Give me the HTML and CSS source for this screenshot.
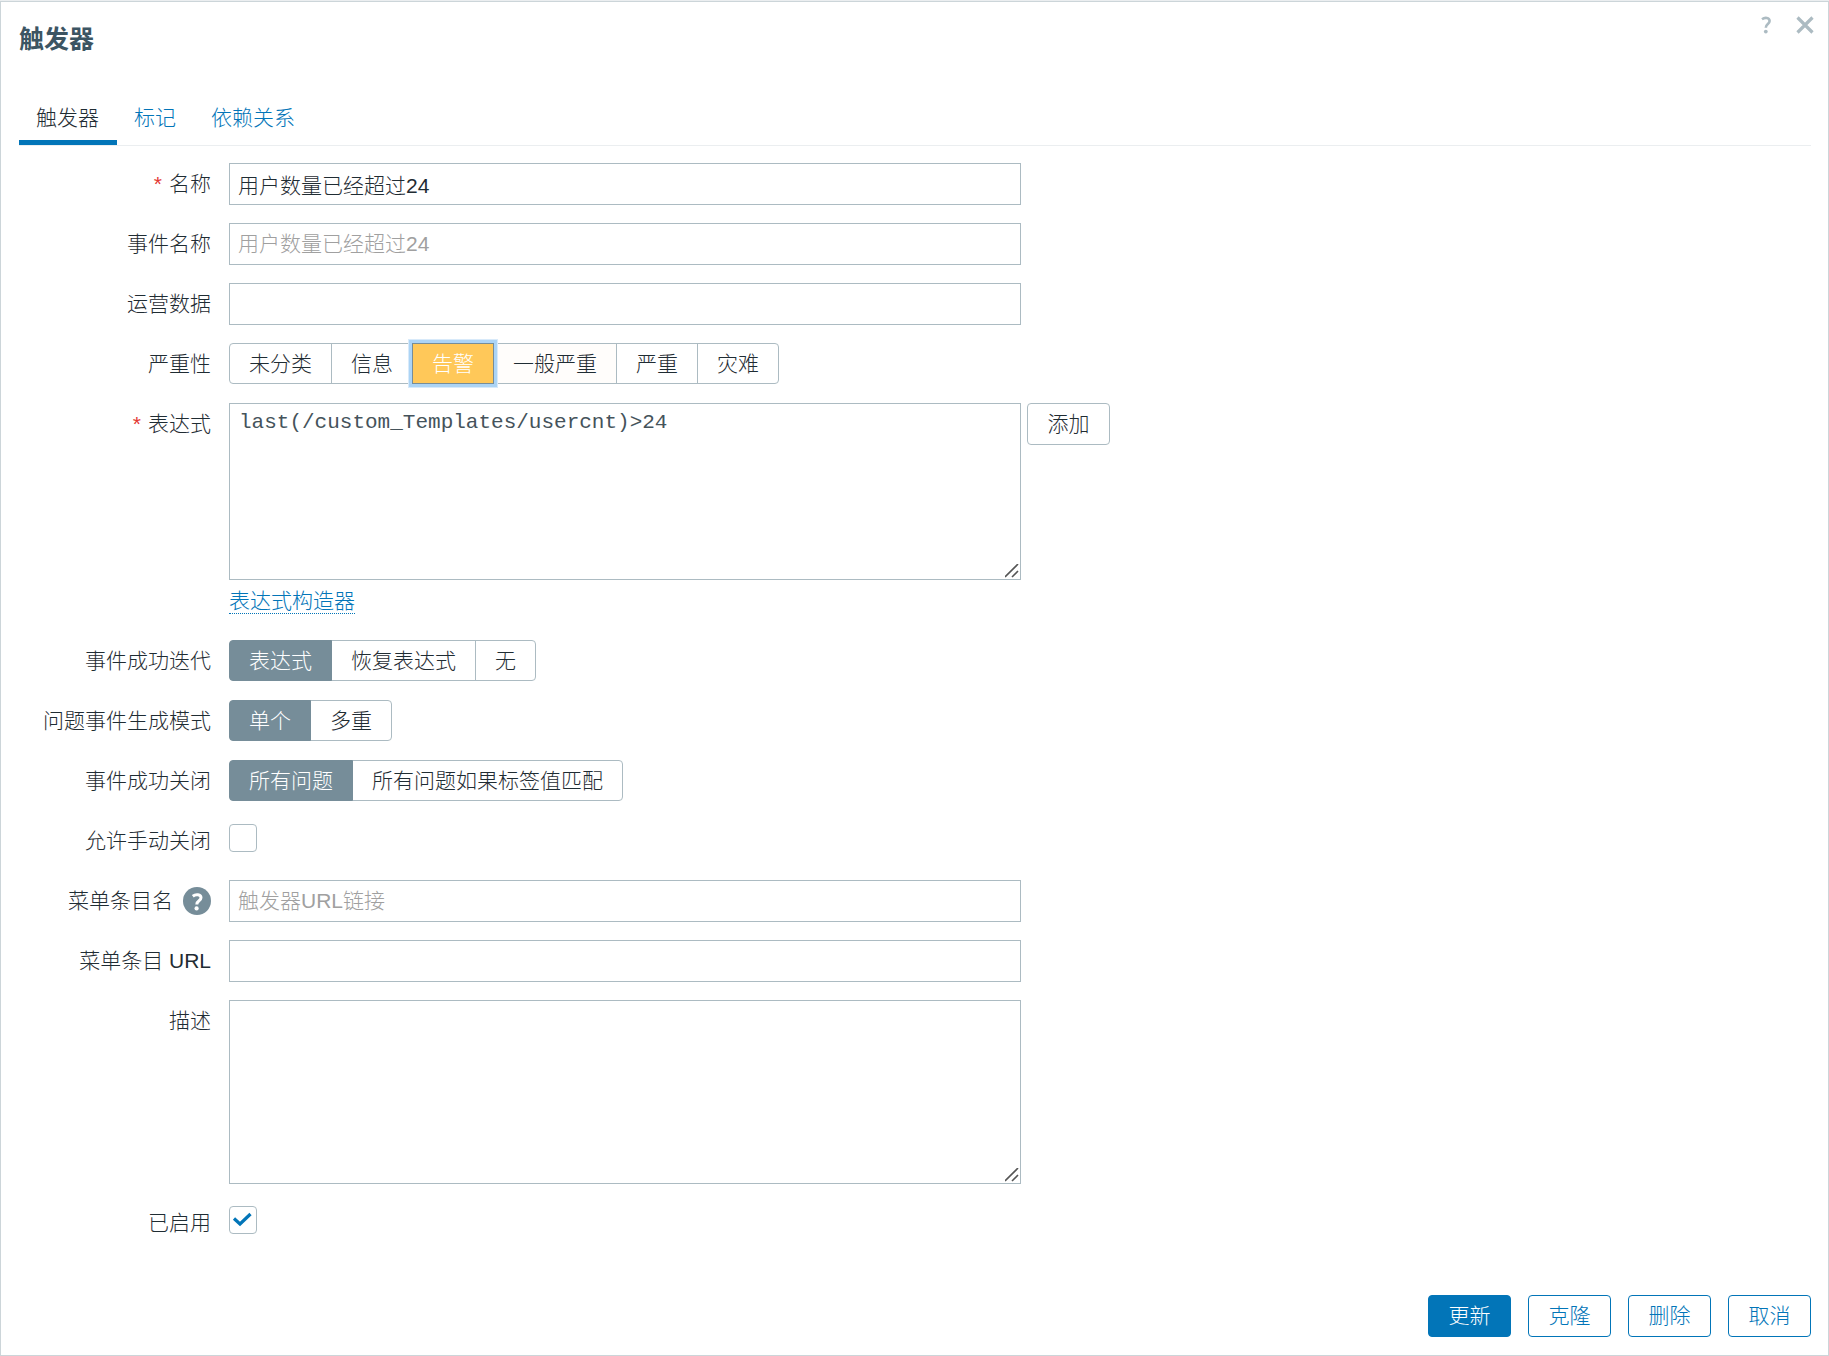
FILE: index.html
```html
<!DOCTYPE html>
<html lang="zh-CN">
<head>
    <meta charset="UTF-8">
    <meta name="viewport" content="width=device-width, initial-scale=1.0">
    <title>触发器</title>
    <link rel="stylesheet" href="styles.css">
</head>
<body>
    <div class="dialog">
        <header class="dialog-header">
            <h4>触发器</h4>
            <div class="header-controls">
                <a class="icon-link" href="#" aria-label="帮助">
                    <svg width="12" height="18" viewBox="0 0 12 18"><path d="M2 3.2C4.8 1.2 9.6 1.4 9.6 5C9.6 8.2 5.8 8 5.8 11.8" fill="none" stroke="currentColor" stroke-width="2.6"/><circle cx="5.8" cy="15.6" r="1.9" fill="currentColor"/></svg>
                </a>
                <button type="button" class="icon-link" aria-label="关闭">
                    <svg width="18" height="18" viewBox="0 0 18 18"><path d="M1.5 1.5L16.5 16.5M16.5 1.5L1.5 16.5" fill="none" stroke="currentColor" stroke-width="3.2"/></svg>
                </button>
            </div>
        </header>

        <nav class="tabs">
            <a class="tab active" href="#trigger">触发器</a>
            <a class="tab" href="#tags">标记</a>
            <a class="tab" href="#dependencies">依赖关系</a>
        </nav>

        <form class="form" id="trigger">
            <label class="label required" for="name">名称</label>
            <div class="field"><input class="text" type="text" id="name" value="用户数量已经超过24"></div>

            <label class="label" for="event_name">事件名称</label>
            <div class="field"><input class="text" type="text" id="event_name" placeholder="用户数量已经超过24"></div>

            <label class="label" for="opdata">运营数据</label>
            <div class="field"><input class="text" type="text" id="opdata"></div>

            <span class="label" id="severity-label">严重性</span>
            <div class="field">
                <div class="segments" role="radiogroup" aria-labelledby="severity-label">
                    <label><input type="radio" name="severity">未分类</label>
                    <label><input type="radio" name="severity">信息</label>
                    <label class="warning"><input type="radio" name="severity" checked>告警</label>
                    <label class="average"><input type="radio" name="severity">一般严重</label>
                    <label><input type="radio" name="severity">严重</label>
                    <label><input type="radio" name="severity">灾难</label>
                </div>
            </div>

            <label class="label required" for="expression">表达式</label>
            <div class="field">
                <div class="field-row">
                    <textarea class="text expression" id="expression" spellcheck="false">last(/custom_Templates/usercnt)&gt;24</textarea>
                    <button type="button" class="btn btn-grey">添加</button>
                </div>
                <div class="constructor"><a href="#">表达式构造器</a></div>
            </div>

            <span class="label" id="recovery-label">事件成功迭代</span>
            <div class="field">
                <div class="segments" role="radiogroup" aria-labelledby="recovery-label">
                    <label><input type="radio" name="recovery" checked>表达式</label>
                    <label><input type="radio" name="recovery">恢复表达式</label>
                    <label><input type="radio" name="recovery">无</label>
                </div>
            </div>

            <span class="label" id="mode-label">问题事件生成模式</span>
            <div class="field">
                <div class="segments" role="radiogroup" aria-labelledby="mode-label">
                    <label><input type="radio" name="mode" checked>单个</label>
                    <label><input type="radio" name="mode">多重</label>
                </div>
            </div>

            <span class="label" id="closes-label">事件成功关闭</span>
            <div class="field">
                <div class="segments" role="radiogroup" aria-labelledby="closes-label">
                    <label><input type="radio" name="closes" checked>所有问题</label>
                    <label><input type="radio" name="closes">所有问题如果标签值匹配</label>
                </div>
            </div>

            <label class="label" for="manual_close">允许手动关闭</label>
            <div class="field"><input class="check" type="checkbox" id="manual_close"></div>

            <div class="label">
                <label for="url_name">菜单条目名</label>
                <button type="button" class="hint" aria-label="帮助">
                    <svg width="28" height="28" viewBox="0 0 28 28"><circle cx="14" cy="14" r="14" fill="#768d99"/><path d="M9.8 9.2C12.6 7 18 7.2 18 10.8C18 14 13.8 13.6 13.8 17.4" fill="none" stroke="#fff" stroke-width="3"/><circle cx="13.6" cy="21.4" r="2.1" fill="#fff"/></svg>
                </button>
            </div>
            <div class="field"><input class="text" type="text" id="url_name" placeholder="触发器URL链接"></div>

            <label class="label" for="url">菜单条目 URL</label>
            <div class="field"><input class="text" type="text" id="url"></div>

            <label class="label" for="comments">描述</label>
            <div class="field"><textarea class="text comments" id="comments"></textarea></div>

            <label class="label" for="enabled">已启用</label>
            <div class="field"><input class="check" type="checkbox" id="enabled" checked></div>
        </form>

        <footer class="dialog-footer">
            <button type="button" class="btn btn-main">更新</button>
            <button type="button" class="btn">克隆</button>
            <button type="button" class="btn">删除</button>
            <button type="button" class="btn">取消</button>
        </footer>
    </div>
</body>
</html>
```
FILE: styles.css
```css
* {
    box-sizing: border-box;
}

body {
    margin: 0;
    background: #ebeef0;
    color: #1f2c33;
    font-family: "Liberation Sans", "Noto Sans CJK SC", sans-serif;
    font-size: 21px;
    font-weight: 300;
    line-height: 24px;
}

button,
input,
textarea {
    font: inherit;
    color: inherit;
}

a {
    color: #0275b8;
    text-decoration: none;
}

.dialog {
    display: flex;
    flex-direction: column;
    min-height: calc(100vh - 1px);
    margin-top: 1px;
    padding: 0 17px 18px 18px;
    background: #fff;
    border: 1px solid #ccd5d9;
}

.dialog-header {
    display: flex;
    justify-content: space-between;
    align-items: flex-start;
    padding-top: 14px;
}

.dialog-header h4 {
    margin: 9px 0 0;
    color: #3c5563;
    font-size: 25px;
    font-weight: bold;
    line-height: 28px;
}

.header-controls {
    display: flex;
    gap: 24px;
    margin-right: -3px;
}

.icon-link {
    display: block;
    padding: 0;
    border: 0;
    background: none;
    color: #acbbc2;
    cursor: pointer;
}

.icon-link svg,
.hint svg {
    display: block;
}

/* Tabs */
.tabs {
    display: flex;
    margin-top: 41px;
    border-bottom: 1px solid #ebeef0;
}

.tab {
    padding: 12px 18px 10px 17px;
    border-bottom: 5px solid transparent;
}

.tab.active {
    color: #1f2c33;
    border-bottom-color: #0275b8;
}

/* Form grid */
.form {
    display: grid;
    grid-template-columns: 192px 1fr;
    gap: 18px;
    padding: 17px 0 50px;
}

.label {
    display: flex;
    justify-content: flex-end;
    align-items: center;
    gap: 10px;
    height: 42px;
    white-space: nowrap;
}

.required::before {
    content: "*";
    color: #e33734;
    margin-right: -3px;
}

.field {
    min-width: 0;
    min-height: 42px;
}

.field-row {
    display: flex;
    align-items: flex-start;
    gap: 6px;
}

.text {
    display: block;
    width: 792px;
    max-width: 100%;
    height: 42px;
    padding: 0 8px;
    border: 1px solid #acbbc2;
    border-radius: 0;
    background: #fff;
    outline: 0;
}

.text::placeholder {
    color: #a0a0a0;
    opacity: 1;
}

textarea.text {
    padding: 7px 9px;
    resize: vertical;
}

textarea.text::-webkit-resizer {
    background: url("data:image/svg+xml,%3Csvg xmlns='http://www.w3.org/2000/svg' width='15' height='15'%3E%3Cpath d='M0 13L13 0M7 13L13 7' stroke='%23555' stroke-width='1.6'/%3E%3C/svg%3E") no-repeat;
}

textarea.expression {
    height: 177px;
    color: #45535b;
    font-family: "Liberation Mono", monospace;
}

textarea.comments {
    height: 184px;
}

.constructor {
    padding: 9px 0 8px;
}

.constructor a {
    display: inline-block;
    border-bottom: 1px dotted #0275b8;
}

/* Radio segments */
.segments {
    display: flex;
}

.segments label {
    position: relative;
    height: 41px;
    padding: 0 19px;
    border: 1px solid #acbbc2;
    line-height: 39px;
    white-space: nowrap;
    cursor: pointer;
}

.segments label + label {
    margin-left: -1px;
}

.segments label:first-child {
    border-radius: 4px 0 0 4px;
}

.segments label:last-child {
    border-radius: 0 4px 4px 0;
}

.segments input {
    position: absolute;
    opacity: 0;
    margin: 0;
}

.segments label:has(:checked) {
    z-index: 1;
    background: #768d99;
    border-color: #768d99;
    color: #fff;
}

.segments .warning:has(:checked) {
    background: #ffc859;
    box-shadow: 0 0 0 3px #acd4f5, 0 0 0 4px #d8eafa;
}

.segments .average {
    background: #fffdfb;
}

.check {
    display: block;
    appearance: none;
    width: 28px;
    height: 28px;
    margin: 4px 0 0;
    border: 1px solid #acbbc2;
    border-radius: 4px;
    background: #fff;
}

.check:checked {
    background: url("data:image/svg+xml,%3Csvg xmlns='http://www.w3.org/2000/svg' width='26' height='26'%3E%3Cpath d='M4 11.5L10 17L20.5 7' fill='none' stroke='%230275b8' stroke-width='3.2'/%3E%3C/svg%3E") no-repeat;
}

.hint {
    padding: 0;
    border: 0;
    background: none;
    cursor: pointer;
}

/* Buttons */
.btn {
    min-width: 83px;
    height: 42px;
    padding: 0 19px;
    border: 1px solid #0275b8;
    border-radius: 4px;
    background: #fff;
    color: #0275b8;
    white-space: nowrap;
    cursor: pointer;
}

.btn-main {
    background: #0275b8;
    color: #fff;
}

.btn-grey {
    border-color: #acbbc2;
    color: #1f2c33;
}

.dialog-footer {
    display: flex;
    justify-content: flex-end;
    gap: 17px;
    margin-top: auto;
}
```
